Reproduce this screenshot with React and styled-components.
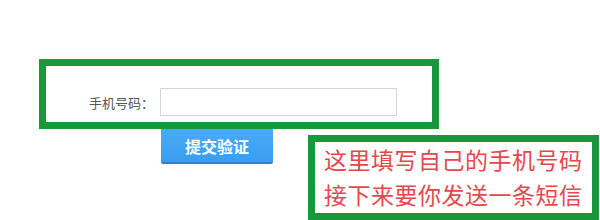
import React from "react";
import styled, { createGlobalStyle } from "styled-components";

const Global = createGlobalStyle`
  html, body { margin: 0; padding: 0; background: #fff; }
  body { font-family: "Noto Sans CJK SC", "Noto Sans", sans-serif; }
`;

const Page = styled.div`
  position: relative;
  width: 600px;
  height: 220px;
  overflow: hidden;
  background: #fff;
`;

const Form = styled.form`
  display: flex;
  flex-direction: column;
  padding-top: 88px;
`;

const Row = styled.div`
  display: flex;
  align-items: center;
`;

const Label = styled.label`
  width: 160px;
  padding-right: 6px;
  box-sizing: border-box;
  text-align: right;
  font-size: 13px;
  color: #555;
  white-space: nowrap;
`;

const Input = styled.input`
  width: 237px;
  height: 28px;
  box-sizing: border-box;
  border: 1px solid #d4d4d4;
  background: #fff;
  outline: none;
`;

const Submit = styled.button`
  margin: 9px 0 0 161px;
  width: 112px;
  height: 39px;
  border: none;
  border-bottom: 2px solid #2a82d6;
  border-radius: 2px;
  background: linear-gradient(#4cacf6, #3a9df0);
  color: #fff;
  font-family: "Noto Sans CJK SC", sans-serif;
  font-size: 16px;
  font-weight: 700;
  padding: 4px 0 0;
  cursor: pointer;
`;

const Highlight = styled.div`
  position: absolute;
  left: ${(p) => p.$left}px;
  top: ${(p) => p.$top}px;
  width: ${(p) => p.$width}px;
  height: ${(p) => p.$height}px;
  box-sizing: border-box;
  border: 7px solid #17983a;
  background: ${(p) => (p.$filled ? "#fff" : "transparent")};
`;

const Note = styled.div`
  display: flex;
  flex-direction: column;
  padding: 0 0 0 9px;
  color: #e5474c;
  font-family: "Noto Sans CJK SC", sans-serif;
  font-size: 23px;
  line-height: 35px;
  letter-spacing: 0.5px;
  white-space: nowrap;
`;

export default function App() {
  return (
    <Page>
      <Global />
      <Form onSubmit={(e) => e.preventDefault()}>
        <Row>
          <Label>手机号码：</Label>
          <Input type="text" />
        </Row>
        <Submit type="submit">提交验证</Submit>
      </Form>
      <Highlight $left={39} $top={59} $width={400} $height={70} />
      <Highlight $left={308} $top={135} $width={291} $height={85} $filled>
        <Note>
          <span>这里填写自己的手机号码</span>
          <span>接下来要你发送一条短信</span>
        </Note>
      </Highlight>
    </Page>
  );
}
